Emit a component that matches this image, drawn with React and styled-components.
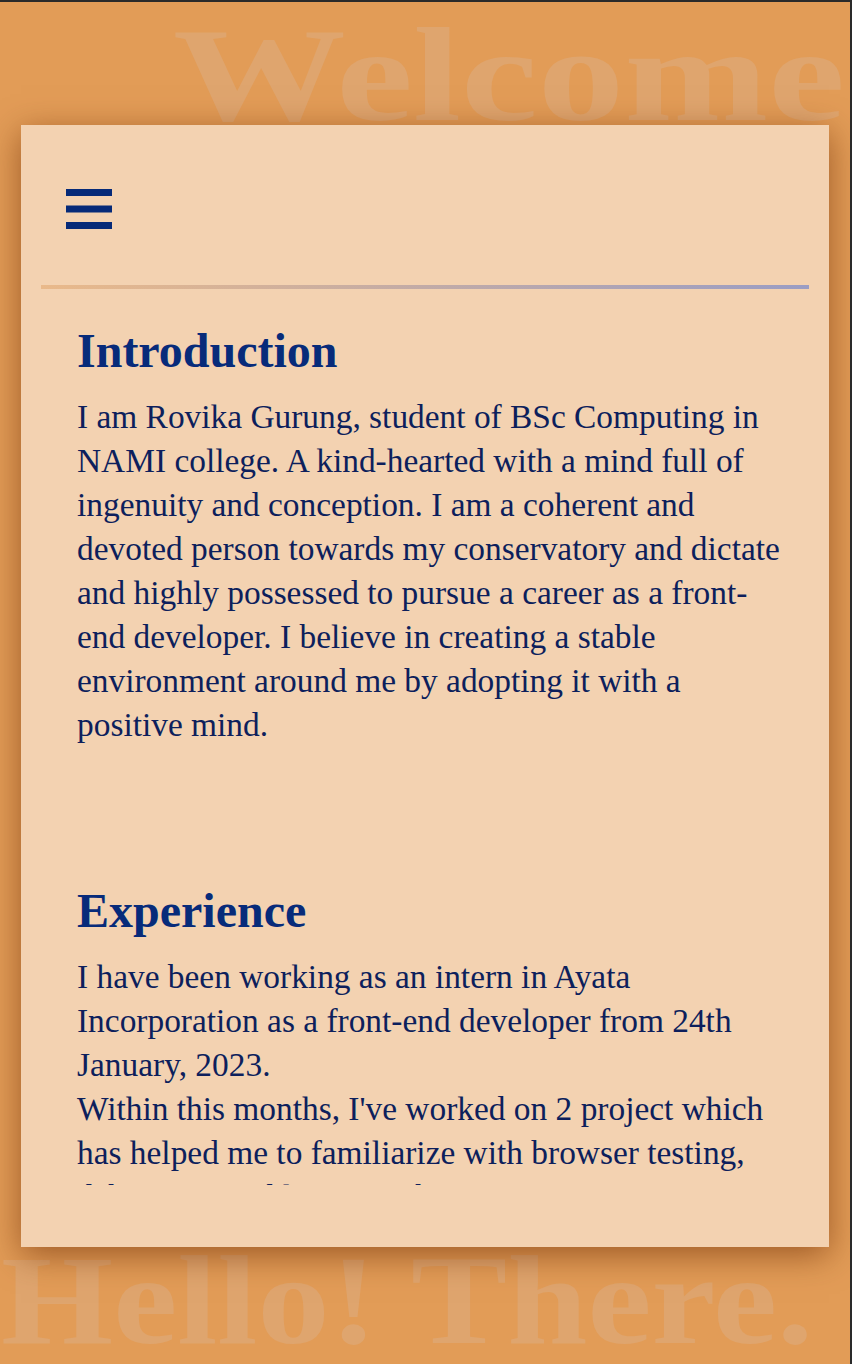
import React from 'react';
import styled, { createGlobalStyle } from 'styled-components';

const GlobalStyle = createGlobalStyle`
  html, body {
    margin: 0;
    padding: 0;
    background: #e29c57;
  }
  * {
    box-sizing: border-box;
  }
`;

const sections = [
  {
    title: 'Introduction',
    lines: [
      'I am Rovika Gurung, student of BSc Computing in NAMI college. A kind-hearted with a mind full of ingenuity and conception. I am a coherent and devoted person towards my conservatory and dictate and highly possessed to pursue a career as a front-end developer. I believe in creating a stable environment around me by adopting it with a positive mind.',
    ],
  },
  {
    title: 'Experience',
    lines: [
      'I have been working as an intern in Ayata Incorporation as a front-end developer from 24th January, 2023.',
      "Within this months, I've worked on 2 project which has helped me to familiarize with browser testing, debugging and learning about API integration.",
      'Furthermore, it has taught me to work in a team and to meet deadlines.',
    ],
  },
];

const MenuIcon = () => (
  <svg width="46" height="40" viewBox="0 0 46 40" aria-hidden="true">
    <rect x="0" y="0" width="46" height="7" fill="#062a78" />
    <rect x="0" y="16.5" width="46" height="7" fill="#062a78" />
    <rect x="0" y="33" width="46" height="7" fill="#062a78" />
  </svg>
);

const App = () => {
  return (
    <Page>
      <GlobalStyle />
      <TopBand>
        <BackdropWord $size={134} $stretch={1.29} $leading={1}>
          Welcome
        </BackdropWord>
      </TopBand>
      <Card>
        <Header>
          <MenuButton type="button" aria-label="menu">
            <MenuIcon />
          </MenuButton>
        </Header>
        <Divider />
        <Content>
          {sections.map(({ title, lines }) => (
            <Section key={title}>
              <Title>{title}</Title>
              {lines.map((line) => (
                <Text key={line}>{line}</Text>
              ))}
            </Section>
          ))}
        </Content>
      </Card>
      <BottomBand>
        <BackdropWord $size={126} $stretch={1.145} $leading={0.86}>
          Hello! There.
        </BackdropWord>
      </BottomBand>
    </Page>
  );
};

export default App;

const Page = styled.div`
  width: 852px;
  height: 1364px;
  overflow: hidden;
  display: flex;
  flex-direction: column;
  background: #e29c57;
  border-top: 2px solid #2a2a2a;
  border-right: 2px solid #2a2a2a;
`;

const TopBand = styled.div`
  height: 123px;
  flex: none;
  padding: 6px 0 0 173px;
  white-space: nowrap;
`;

const BottomBand = styled.div`
  flex: 1;
  padding-left: 1px;
  white-space: nowrap;
`;

const BackdropWord = styled.div`
  display: inline-block;
  font-family: 'Liberation Serif', 'Times New Roman', serif;
  font-weight: 700;
  font-size: ${({ $size }) => $size}px;
  line-height: ${({ $leading }) => $leading};
  color: #dfa56e;
  transform: scaleX(${({ $stretch }) => $stretch});
  transform-origin: left top;
`;

const Card = styled.div`
  position: relative;
  z-index: 1;
  flex: none;
  height: 1122px;
  margin: 0 21px;
  display: flex;
  flex-direction: column;
  padding-bottom: 62px;
  background: #f3d2b1;
  box-shadow: 0 8px 32px rgba(110, 45, 5, 0.6);
`;

const Header = styled.header`
  display: flex;
  align-items: center;
  padding: 64px 45px 56px;
`;

const MenuButton = styled.button`
  display: flex;
  padding: 0;
  border: 0;
  background: none;
  cursor: pointer;
`;

const Divider = styled.hr`
  flex: none;
  height: 4px;
  margin: 0 20px;
  border: 0;
  background: linear-gradient(to right, #e9b98a, #9a9dc4);
`;

const Content = styled.main`
  flex: 1;
  min-height: 0;
  overflow: hidden;
  padding: 0 48px 0 56px;
`;

const Section = styled.section`
  padding-top: 34px;

  & + & {
    margin-top: 102px;
  }
`;

const Title = styled.h2`
  margin: 0 0 17px;
  font-family: 'Liberation Serif', 'Times New Roman', serif;
  font-size: 48px;
  font-weight: 700;
  line-height: 55px;
  color: #072b7a;
`;

const Text = styled.p`
  margin: 0;
  font-family: 'Liberation Serif', 'Times New Roman', serif;
  font-size: 33.4px;
  line-height: 44px;
  color: #0d1f5c;
`;
